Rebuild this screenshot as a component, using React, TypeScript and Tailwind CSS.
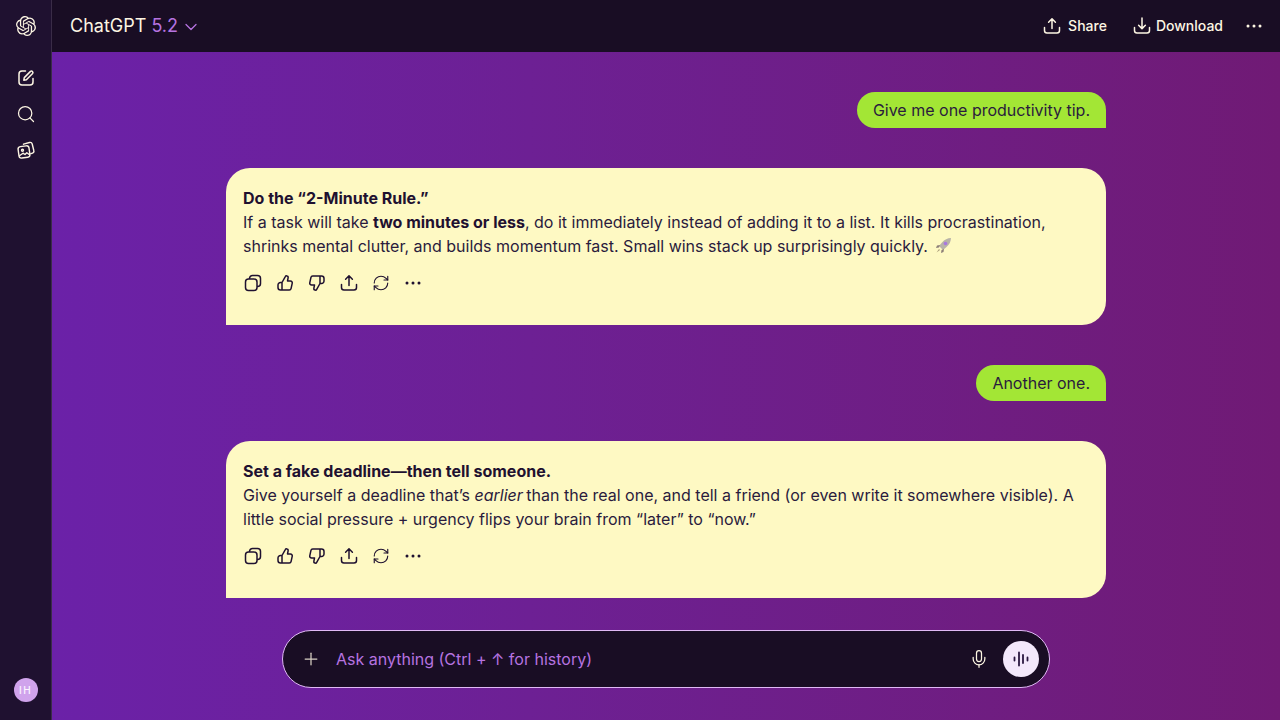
import React from "react";
import { ChevronDown, Mic, Plus, RefreshCw, Search } from "lucide-react";
import { SiOpenai } from "react-icons/si";

const ShareIcon = ({ size = 20 }: { size?: number }) => (
  <svg width={size} height={size} viewBox="0 0 20 20" fill="none" stroke="currentColor" strokeWidth="1.5" strokeLinecap="round" strokeLinejoin="round">
    <path d="M10 12.500V3M6.600 6.200 10 2.800l3.400 3.400" />
    <path d="M2.500 11.500V14.500A2.500 2.500 0 0 0 5 17h10a2.500 2.500 0 0 0 2.500-2.500v-3" />
  </svg>
);

const DownloadIcon = ({ size = 20 }: { size?: number }) => (
  <svg width={size} height={size} viewBox="0 0 20 20" fill="none" stroke="currentColor" strokeWidth="1.5" strokeLinecap="round" strokeLinejoin="round">
    <path d="M10 2V12.500M6.600 9.200 10 12.600l3.400-3.400" />
    <path d="M2.500 11.500V14.500A2.500 2.500 0 0 0 5 17h10a2.500 2.500 0 0 0 2.500-2.500v-3" />
  </svg>
);

const CopyIcon = () => (
  <svg width="20" height="20" viewBox="0 0 20 20" fill="none" stroke="currentColor" strokeWidth="1.5" strokeLinejoin="round">
    <rect x="2.500" y="6" width="11.500" height="11.500" rx="3" />
    <path d="M6.500 6V5.500a3 3 0 0 1 3-3h5a3 3 0 0 1 3 3v5a3 3 0 0 1-3 3H14" />
  </svg>
);

const ThumbUpIcon = ({ className }: { className?: string }) => (
  <svg width="20" height="20" viewBox="0 0 20 20" fill="none" stroke="currentColor" strokeWidth="1.5" strokeLinecap="round" strokeLinejoin="round" className={className}>
    <path d="M7 9.500 10.300 3.600c.3-.6 1-.9 1.600-.7.900.2 1.400 1.100 1.200 2L12.500 8h3a1.800 1.800 0 0 1 1.750 2.200l-1.200 5.400A1.800 1.800 0 0 1 14.300 17H5.500A2.500 2.500 0 0 1 3 14.500V12A2.500 2.500 0 0 1 5.500 9.500H7zM7 9.500V17" />
  </svg>
);

const EditIcon = () => (
  <svg width="20" height="20" viewBox="0 0 20 20" fill="none" stroke="currentColor" strokeWidth="1.5" strokeLinecap="round" strokeLinejoin="round">
    <path d="M9.500 3H6a3 3 0 0 0-3 3v8a3 3 0 0 0 3 3h8a3 3 0 0 0 3-3v-3.500" />
    <path d="M7.800 12.200l.5-2.600 6.200-6.200a1.500 1.500 0 0 1 2.100 2.100l-6.200 6.200z" />
  </svg>
);

const ImagesIcon = () => (
  <svg width="20" height="20" viewBox="0 0 20 20" fill="none" stroke="currentColor" strokeWidth="1.4" strokeLinecap="round" strokeLinejoin="round">
    <rect x="2.500" y="6.200" width="11" height="11.500" rx="2.500" transform="rotate(-8 8 12)" />
    <path d="M7.500 4.200 13.500 2.500a2.200 2.200 0 0 1 2.700 1.500l1.600 6.500a2.200 2.200 0 0 1-1.500 2.700l-1.500.4" />
    <circle cx="6.500" cy="10.300" r="1" />
    <path d="M3.800 15.500 7 13.200l2 1.300 1.800-1.800 2.700 2" />
  </svg>
);

const VoiceIcon = () => (
  <svg width="20" height="20" viewBox="0 0 20 20" fill="none" stroke="currentColor" strokeWidth="1.8" strokeLinecap="round">
    <path d="M3.500 8.500v3M8 3.500v13M12 6v8M16.500 8.500v3" />
  </svg>
);

const Dots = () => (
  <svg width="20" height="20" viewBox="0 0 20 20" fill="currentColor">
    <circle cx="4" cy="10" r="1.500" />
    <circle cx="10" cy="10" r="1.500" />
    <circle cx="16" cy="10" r="1.500" />
  </svg>
);

const Rocket = () => (
  <svg width="17" height="17" viewBox="0 0 17 17" className="ml-[7px] inline-block align-[-2px]">
    <path d="M16 1c-3.500.2-6.500 1.500-9 4.500L4 9l4 4 3.500-3C14.500 7.500 15.800 4.500 16 1z" fill="#b9b3a8" />
    <circle cx="10.500" cy="6.500" r="1.800" fill="#a977e0" />
    <path d="M5 8 2 8.500 1 11l3-.5zM9 12l-.5 3L6 16l.5-3z" fill="#8d7f78" />
    <path d="M4 12 1.500 15.500 5 13z" fill="#a89a78" />
  </svg>
);

const Actions = () => (
  <div className="mt-[15px] flex items-center gap-3 text-[#1f1130]">
    <CopyIcon />
    <ThumbUpIcon />
    <ThumbUpIcon className="rotate-180" />
    <ShareIcon />
    <RefreshCw size={18} strokeWidth={1.5} className="m-px" />
    <Dots />
  </div>
);

const UserBubble = ({ children }: { children: React.ReactNode }) => (
  <div className="self-end rounded-[18px] rounded-br-none bg-[#a3e635] px-4 py-1.5 text-[#2a1b3d]">{children}</div>
);

const AssistantBubble = ({ children }: { children: React.ReactNode }) => (
  <div className="h-[157px] rounded-3xl rounded-bl-none bg-[#fef9c3] pl-[17px] pr-4 pt-[18px] text-[#2a1b3d]">
    {children}
    <Actions />
  </div>
);

export default function App() {
  return (
    <div className="flex h-screen overflow-hidden font-['Inter',sans-serif] text-base leading-6">
      {/* Sidebar */}
      <aside className="flex w-[52px] shrink-0 flex-col items-center justify-between border-r border-[#3a2c47] bg-[#1f1130] pb-[18px] pt-4 text-[#fdf6e3]">
        <div className="flex flex-col items-center">
          <SiOpenai size={20} />
          <div className="mt-[32px] flex flex-col items-center gap-4">
            <EditIcon />
            <Search size={20} strokeWidth={1.5} />
            <ImagesIcon />
          </div>
        </div>
        <div className="flex h-6 w-6 items-center justify-center rounded-full bg-[#d0a3ec] text-[10px] font-medium tracking-[0.15em] text-[#fbf3ff]">
          IH
        </div>
      </aside>

      <div className="flex min-w-0 flex-1 flex-col bg-gradient-to-r from-[#6b21a8] to-[#701a75]">
        {/* Top bar */}
        <header className="flex h-[52px] shrink-0 items-center justify-between bg-[#190d24] pl-[18px] pr-4 text-[#fdf6e3]">
          <div className="flex items-center gap-[3px] text-lg">
            <span>
              ChatGPT <span className="text-[#b673e0]">5.2</span>
            </span>
            <ChevronDown size={20} strokeWidth={1.5} className="mt-0.5 text-[#b673e0]" />
          </div>
          <div className="flex items-center text-sm font-medium">
            <div className="flex items-center gap-1.5">
              <ShareIcon />
              Share
            </div>
            <div className="ml-[25px] flex items-center gap-1">
              <DownloadIcon />
              Download
            </div>
            <div className="ml-[21px]">
              <Dots />
            </div>
          </div>
        </header>

        {/* Conversation */}
        <main className="mx-auto flex w-[880px] flex-col gap-10 pt-10">
          <UserBubble>Give me one productivity tip.</UserBubble>
          <AssistantBubble>
            <p className="font-bold text-[#1f1130]">Do the “2-Minute Rule.”</p>
            <p>
              If a task will take <b className="font-bold text-[#1f1130]">two minutes or less</b>, do it immediately instead of adding it to a list. It kills procrastination, shrinks mental clutter, and builds momentum fast. Small wins stack up surprisingly quickly.
              <Rocket />
            </p>
          </AssistantBubble>
          <UserBubble>Another one.</UserBubble>
          <AssistantBubble>
            <p className="font-bold text-[#1f1130]">Set a fake deadline—then tell someone.</p>
            <p>
              Give yourself a deadline that’s <i className="-mr-px">earlier</i> than the real one, and tell a friend (or even write it somewhere visible). A little social pressure + urgency flips your brain from “later” to “now.”
            </p>
          </AssistantBubble>
        </main>

        {/* Composer */}
        <div className="mx-auto mt-8 flex h-[58px] w-[768px] items-center rounded-[29px] border border-[#e0b8f5] bg-[#190d24] pl-[18px] pr-[10px]">
          <Plus size={20} strokeWidth={1.5} className="text-[#d8d0c4]" />
          <span className="ml-[15px] flex-1 text-[#b673e0]">Ask anything (Ctrl + ↑ for history)</span>
          <Mic size={20} strokeWidth={1.5} className="text-[#fdf6e3]" />
          <div className="ml-3.5 flex h-9 w-9 items-center justify-center rounded-full bg-[#f3e8fb] text-[#2a1840]">
            <VoiceIcon />
          </div>
        </div>
      </div>
    </div>
  );
}
